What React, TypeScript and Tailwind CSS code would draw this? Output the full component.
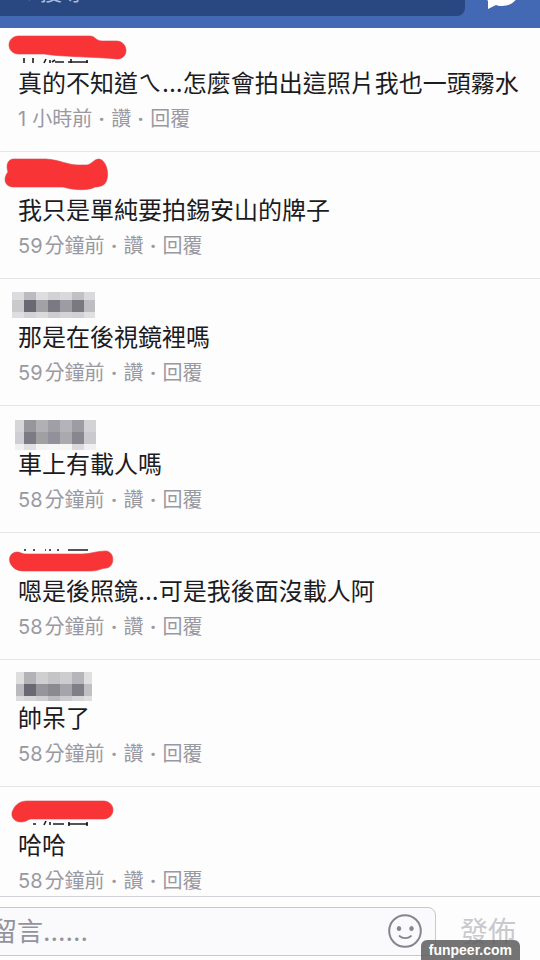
import { Search } from "lucide-react";

type Comment = {
  id: number;
  text: string;
  count: string;
  time: string;
  mask: React.ReactNode;
};

const RED = "#f93437";

function Scribble({ d, marks }: { d: string; marks?: string }) {
  return (
    <svg className="block" width="130" height="47" viewBox="0 0 130 47" aria-hidden="true">
      {marks && <path d={marks} stroke="#1d1d22" strokeWidth="1.6" fill="none" />}
      <path d={d} fill={RED} stroke="#d9474c" strokeWidth="0.6" />
    </svg>
  );
}

// xs and ys are cell edges, one string of colours per row
function Mosaic({ xs, ys, rows }: { xs: number[]; ys: number[]; rows: string[][] }) {
  return (
    <svg className="block" width="130" height="47" viewBox="0 0 130 47" shapeRendering="crispEdges" aria-hidden="true">
      {rows.map((row, r) =>
        row.map((fill, c) => (
          <rect
            key={`${r}-${c}`}
            x={xs[c]}
            y={ys[r]}
            width={xs[c + 1] - xs[c]}
            height={ys[r + 1] - ys[r]}
            fill={fill}
          />
        ))
      )}
    </svg>
  );
}

const comments: Comment[] = [
  {
    id: 1,
    text: "真的不知道ㄟ...怎麼會拍出這照片我也一頭霧水",
    count: "1",
    time: "小時前",
    mask: (
      <Scribble
        d="M18 11H90C95 11 96 16 102 16H117C129 17 129 34 117 34C98 32 62 32 44 29H18C6 28 6 12 18 11Z"
        marks="M24 33v5M33 33v5M44 38l2-4M50 35v3M52 37l3-2M55 37h9M68 37h20M71 34v4M87 35v3"
      />
    ),
  },
  {
    id: 2,
    text: "我只是單純要拍錫安山的牌子",
    count: "59",
    time: "分鐘前",
    mask: (
      <Scribble d="M13 7H46C60 8 68 13 78 13H87C92 12 94 7 99 7C106 8 109 20 107 27C106 33 101 35 95 35C89 39 72 38 63 35H14C4 35 3 26 8 20C6 14 7 8 13 7Z" />
    ),
  },
  {
    id: 3,
    text: "那是在後視鏡裡嗎",
    count: "59",
    time: "分鐘前",
    mask: (
      <Mosaic
        xs={[12, 24, 36, 48, 60, 72, 84, 95]}
        ys={[13, 21, 33, 39]}
        rows={[
          ["#dcdce0", "#bbbbc0", "#dedee1", "#d2d2d6", "#d9d9dc", "#c0c0c5", "#dadadc"],
          ["#cacacd", "#6a6973", "#a1a1a6", "#7b7a82", "#9d9ca3", "#7a7982", "#bebec2"],
          ["#dedee0", "#d2d2d6", "#dadadd", "#cdcdd1", "#d4d4d8", "#d0d0d5", "#e0e0e2"],
        ]}
      />
    ),
  },
  {
    id: 4,
    text: "車上有載人嗎",
    count: "58",
    time: "分鐘前",
    mask: (
      <Mosaic
        xs={[15, 24, 36, 48, 60, 72, 84, 96]}
        ys={[14, 26, 38, 44]}
        rows={[
          ["#d6d6d8", "#97969d", "#b0b0b5", "#a09fa5", "#b3b3b8", "#9d9ca2", "#d3d3d6"],
          ["#cfcfd3", "#7c7b85", "#a09fa2", "#92919a", "#aaa9ae", "#88878f", "#c9c9ce"],
          ["#f0f0f1", "#e0e0e2", "#f4f4f5", "#f6f6f7", "#f6f6f7", "#dadadd", "#f0f0f1"],
        ]}
      />
    ),
  },
  {
    id: 5,
    text: "嗯是後照鏡...可是我後面沒載人阿",
    count: "58",
    time: "分鐘前",
    mask: (
      <Scribble
        d="M17 19C21 19 21 21 27 21H82C91 21 96 18 106 18C115 19 115 33 107 35C101 35 99 38 91 38H22C8 37 5 20 17 19Z"
        marks="M24 17h2M33 17h2M45 17h1M49 17h2M57 17h2M68 17h20"
      />
    ),
  },
  {
    id: 6,
    text: "帥呆了",
    count: "58",
    time: "分鐘前",
    mask: (
      <Mosaic
        xs={[16, 24, 36, 48, 60, 72, 84, 92]}
        ys={[12, 24, 36, 41]}
        rows={[
          ["#dededf", "#b3b2b7", "#cfcfd1", "#c4c4c7", "#cdcdcf", "#b6b6ba", "#dfdfdf"],
          ["#b9b9be", "#6a6872", "#96959b", "#8b8a90", "#a5a4aa", "#807f87", "#bfbfc4"],
          ["#dcdcde", "#d6d6d9", "#cfcfd2", "#bdbdc1", "#cbcbcf", "#d6d6d9", "#dededf"],
        ]}
      />
    ),
  },
  {
    id: 7,
    text: "哈哈",
    count: "58",
    time: "分鐘前",
    mask: (
      <Scribble
        d="M27 14H104C116 15 116 31 104 32H31C28 32 27 35 21 35C13 35 10 28 13 23C15 18 20 14 27 14Z"
        marks="M33 37h3M44 38l2-4M50 35v3M53 37h4M57 37h7M68 37h20M69 35v4M87 35v4"
      />
    ),
  },
];

function TopBar() {
  return (
    <header className="relative z-10 flex h-7 items-end overflow-hidden bg-[#4368b4]">
      <label className="-ml-2 mb-3 flex h-12 flex-1 items-center gap-2 rounded-lg bg-[#294881] pl-5 text-[#a9bbdc]">
        <Search className="size-5 shrink-0" />
        <input
          type="search"
          aria-label="搜尋"
          placeholder="搜尋"
          className="w-full bg-transparent text-[22px] outline-none placeholder:text-[#a9bbdc]"
        />
      </label>
      <button type="button" aria-label="訊息" className="mr-5 mb-4 ml-5">
        <svg className="block" width="35" height="34" viewBox="0 0 35 34" fill="#ffffff">
          <path d="M17 -2C7 -2 0 5 0 13c0 5 1 8 3 10l0 8 8-4c2 1 4 1 6 1 10 0 17-7 17-15S27 -2 17 -2Z" />
        </svg>
      </button>
    </header>
  );
}

function CommentRow({ comment }: { comment: Comment }) {
  return (
    <li className="border-b border-[#e6e6e9] pb-[22px] last:border-0 last:pb-[5px]">
      {comment.mask}
      <p className="pl-[18px] text-[24px] leading-6 whitespace-nowrap text-[#1b1b22]">{comment.text}</p>
      <div className="mt-[13px] flex h-5 items-center pl-[18px] text-[20px] leading-5 text-[#9999a2]">
        <span className={comment.count === "1" ? "mr-1.5" : "mr-0.5"}>{comment.count}</span>
        <span>{comment.time}</span>
        <span className="w-[19px] text-center font-bold">·</span>
        <button type="button">讚</button>
        <span className="w-[19px] text-center font-bold">·</span>
        <button type="button">回覆</button>
      </div>
    </li>
  );
}

function Composer() {
  return (
    <form className="flex border-t border-[#d3d3d7] pt-[10px] pb-1" onSubmit={(e) => e.preventDefault()}>
      <div className="-ml-4 flex h-[49px] min-w-0 flex-1 items-center rounded-lg border border-[#c8c8cd] bg-[#fafafc] pr-3 pl-1.5">
        <input
          type="text"
          aria-label="留言"
          placeholder="留言......"
          className="min-w-0 flex-1 bg-transparent text-[26px] outline-none placeholder:text-[#93939c]"
        />
        <button type="button" aria-label="表情">
          <svg className="block" width="35" height="35" viewBox="0 0 35 35" fill="none" stroke="#85858d">
            <circle cx="17" cy="17" r="15.8" strokeWidth="2" />
            <ellipse cx="11" cy="14.5" rx="2.2" ry="2.5" fill="#85858d" stroke="none" />
            <ellipse cx="23.5" cy="14.5" rx="2.2" ry="2.5" fill="#85858d" stroke="none" />
            <path d="M11.5 22C14.5 24.8 20 24.8 23 22" strokeWidth="1.8" strokeLinecap="round" />
          </svg>
        </button>
      </div>
      <button type="submit" className="px-6 text-[28px] text-[#c9c9cd]">
        發佈
      </button>
    </form>
  );
}

export default function App() {
  return (
    <div className="relative overflow-hidden bg-[#fdfdfe] font-[Inter,'Noto_Sans_CJK_TC',sans-serif]">
      <TopBar />
      <ul className="-mt-[3px]">
        {comments.map((comment) => (
          <CommentRow key={comment.id} comment={comment} />
        ))}
      </ul>
      <Composer />
      <div className="absolute right-5 bottom-0 h-5 rounded-t-md bg-[#5c5c5c]/85 px-2 font-['Liberation_Sans',sans-serif] text-[14px] leading-5 font-bold text-white">
        funpeer.com
      </div>
    </div>
  );
}
